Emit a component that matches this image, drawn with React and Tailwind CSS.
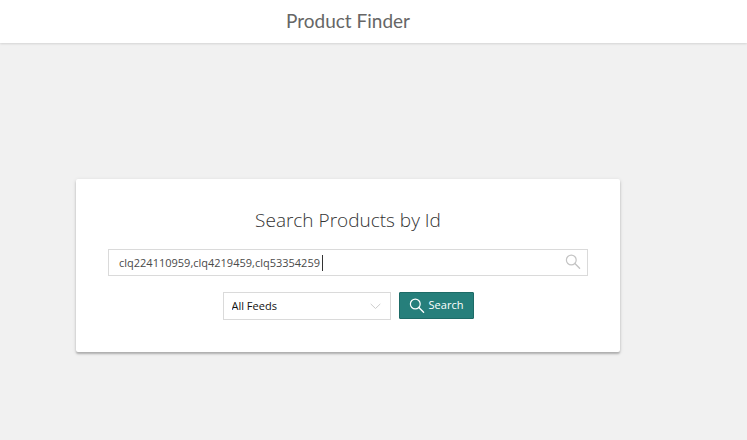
function SearchIcon({ className }) {
  return (
    <svg className={className} viewBox="0 0 16 16" fill="none" stroke="currentColor" strokeLinecap="round" aria-hidden="true">
      <circle cx="6.3" cy="6" r="4.9" strokeWidth="1.2" />
      <path d="M9.9 9.6 14.6 14.2" strokeWidth="1.4" />
    </svg>
  );
}

function Header() {
  return (
    <header className="relative h-[43px] bg-white pr-[51px] text-center shadow-[0_1px_2px_rgba(0,0,0,0.12)]">
      <h1 className="font-['Lato',sans-serif] text-[19px] leading-[42px] text-[#666666]">Product Finder</h1>
    </header>
  );
}

function SearchCard() {
  return (
    <form
      className="w-full max-w-[544px] rounded-xs bg-white px-8 pt-6 pb-8 shadow-[0_1px_4px_rgba(0,0,0,0.12),0_2px_2px_rgba(0,0,0,0.22)]"
      onSubmit={(e) => e.preventDefault()}
    >
      <h2 className="text-center text-[19px] leading-[34px] font-light text-[#333333]">
        <label htmlFor="ids">Search Products by Id</label>
      </h2>
      <div className="relative mt-3 text-[11px]">
        <input
          id="ids"
          type="text"
          defaultValue="clq224110959,clq4219459,clq53354259"
          className="block h-[27px] w-full border border-[#dadada] bg-white pr-8 pb-px pl-[10px] text-[#4a4a4a] outline-none"
        />
        <span className="absolute top-[6px] left-[214px] h-4 w-px bg-[#333333]" />
        <SearchIcon className="absolute top-[5px] right-[7px] size-4 text-[#c4c4c4]" />
      </div>
      <div className="mt-4 flex items-start justify-center gap-2 text-[11px]">
        <div className="relative w-[168px]">
          <select
            aria-label="Feed"
            className="block h-7 w-full appearance-none border border-[#dadada] bg-white pr-7 pl-2 text-[#111111] outline-none"
          >
            <option>All Feeds</option>
          </select>
          <svg
            className="pointer-events-none absolute top-[11px] right-[10px] h-[7px] w-[11px] text-[#cccccc]"
            viewBox="0 0 11 7"
            fill="none"
            stroke="currentColor"
            aria-hidden="true"
          >
            <path d="M.7.9 5.5 5.5 10.3.9" />
          </svg>
        </div>
        <button
          type="submit"
          className="flex h-[27px] w-[75px] items-center justify-center gap-1 rounded-[1px] border border-[#1d6b67] bg-[#267f7b] text-white"
        >
          <SearchIcon className="size-4" />
          Search
        </button>
      </div>
    </form>
  );
}

export default function App() {
  return (
    <div className="min-h-screen bg-[#f1f1f1] font-['Open_Sans',sans-serif]">
      <Header />
      <main className="flex justify-center pt-[136px] pr-[51px] pb-8">
        <SearchCard />
      </main>
    </div>
  );
}
